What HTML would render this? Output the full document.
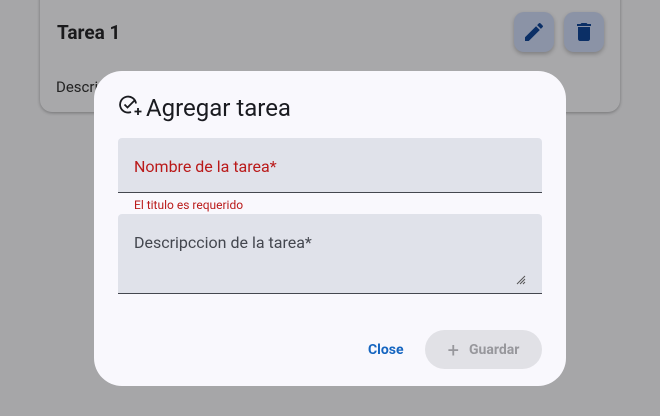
<!DOCTYPE html>
<html><head><meta charset="utf-8"><style>
*{box-sizing:border-box;margin:0;padding:0}
body{width:660px;height:416px;overflow:hidden;background:#a6a6a8;font-family:"Roboto","Liberation Sans",sans-serif;position:relative}
.card{position:absolute;left:40px;top:-20px;width:580px;height:132px;border-radius:12px;background:#a8a8aa;box-shadow:0 1px 3px rgba(0,0,0,.3)}
.t1{position:absolute;left:57px;top:21px;font-size:19px;font-weight:bold;color:#1a1a1c}
.desc{position:absolute;left:56px;top:78px;font-size:15px;color:#222}
.ib{position:absolute;top:12px;width:40px;height:40px;border-radius:10px;background:#8b93a6;box-shadow:0 2px 4px rgba(0,0,0,.25);display:flex;align-items:center;justify-content:center}
.dlg{position:absolute;left:94px;top:71px;width:472px;height:315px;border-radius:28px;background:#f9f8fd}
.title{position:absolute;left:146px;top:94px;font-size:24px;color:#1a1b20}
.f{position:absolute;left:118px;width:424px;background:#e0e2ea;border-radius:4px 4px 0 0;border-bottom:1px solid #44474f}
.lbl{position:absolute;left:16px;font-size:16px}
.err{position:absolute;left:134px;top:198px;font-size:12px;color:#ba1a1a}
.close{position:absolute;left:368px;top:342px;font-size:14px;font-weight:bold;color:#1565c0}
.g{position:absolute;left:425px;top:330px;width:117px;height:39px;border-radius:20px;background:#e1e1e6;color:#97979c;font-size:14px;font-weight:bold;display:flex;align-items:center;justify-content:center;gap:10px}
</style></head><body>
<div class="card"></div>
<div class="t1">Tarea 1</div>
<div class="desc">Descripcion</div>
<div class="ib" style="left:514px"><svg width="24" height="24" viewBox="0 0 24 24"><path fill="#0b2f66" d="M3 17.25V21h3.75L17.81 9.94l-3.75-3.75L3 17.25zM20.71 7.04a1 1 0 000-1.41l-2.34-2.34a1 1 0 00-1.41 0l-1.83 1.83 3.75 3.75 1.83-1.83z"/></svg></div>
<div class="ib" style="left:564px"><svg width="24" height="24" viewBox="0 0 24 24"><path fill="#0b2f66" d="M6 19c0 1.1.9 2 2 2h8c1.1 0 2-.9 2-2V7H6v12zM19 4h-3.5l-1-1h-5l-1 1H5v2h14V4z"/></svg></div>
<div class="dlg"></div>
<svg style="position:absolute;left:119px;top:95px" width="24" height="24" viewBox="0 0 24 24" fill="none" stroke="#1a1b20" stroke-width="1.8"><path d="M17 8.5A8 8 0 1 0 12 17"/><path d="M5.5 9.5l3 3 7-7"/><path d="M19 13v7M15.5 16.5h7"/></svg>
<div class="title">Agregar tarea</div>
<div class="f" style="top:138px;height:55px"><div class="lbl" style="top:19px;color:#ba1a1a">Nombre de la tarea*</div></div>
<div class="err">El titulo es requerido</div>
<div class="f" style="top:214px;height:80px"><div class="lbl" style="top:19px;color:#44474f">Descripccion de la tarea*</div>
<svg style="position:absolute;right:16px;bottom:8px" width="10" height="10" viewBox="0 0 10 10" stroke="#555" stroke-width="1"><path d="M1 9L9 1M4 9L9 4M7 9L9 7"/></svg></div>
<div class="close">Close</div>
<div class="g"><span style="font-size:20px;font-weight:normal">+</span><span>Guardar</span></div>
</body></html>
